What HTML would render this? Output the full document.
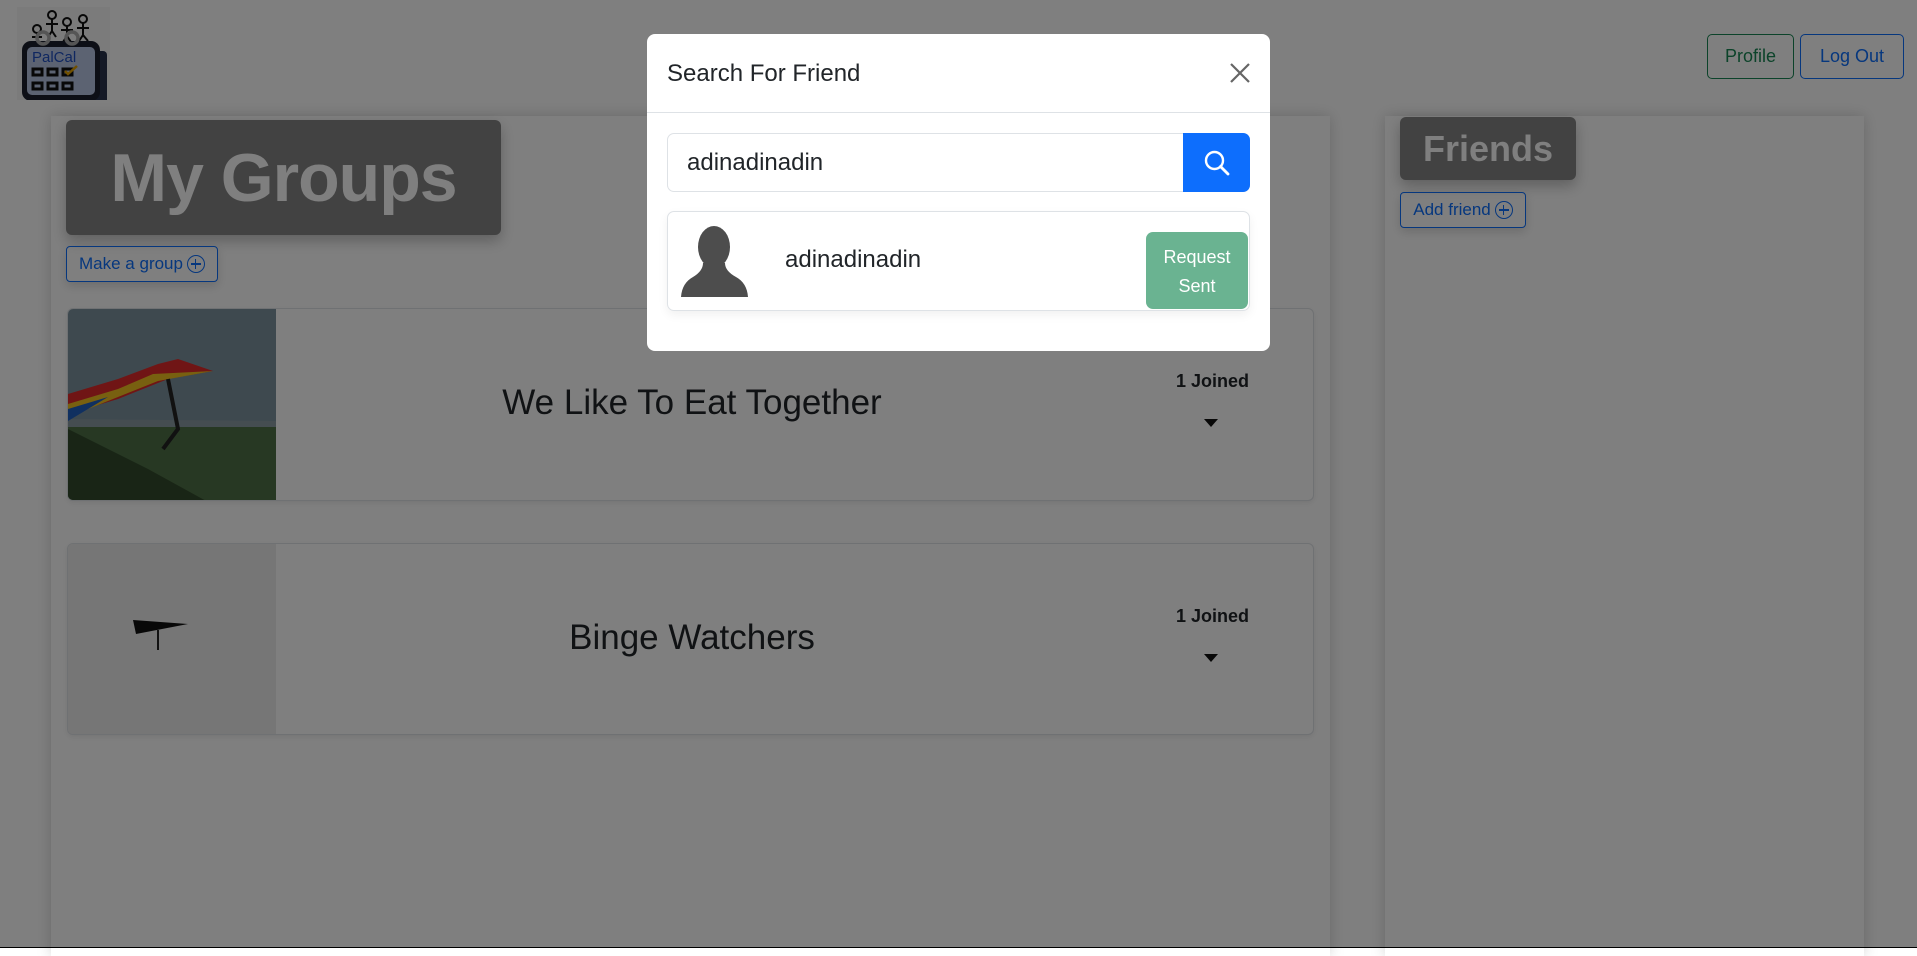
<!DOCTYPE html>
<html><head><meta charset="utf-8"><style>
*{box-sizing:border-box;margin:0;padding:0}
body{width:1917px;height:948px;overflow:hidden;position:relative;background:#fff;font-family:"Liberation Sans",sans-serif;color:#212529}
.abs{position:absolute}
.panel{background:#fff;box-shadow:0 0 14px rgba(0,0,0,.18)}
.btn-o{border:1px solid #0d6efd;color:#0d6efd;border-radius:4px;display:flex;align-items:center;justify-content:center;font-size:17px;box-shadow:0 4px 10px rgba(0,0,0,.15)}
.card{background:#fff;border:1px solid #dee2e6;border-radius:6px;overflow:hidden;box-shadow:0 2px 6px rgba(0,0,0,.08)}
.joined{position:absolute;font-size:18px;font-weight:bold;}
.caret{position:absolute;width:0;height:0;border-left:7px solid transparent;border-right:7px solid transparent;border-top:8px solid #111}
.plus{display:inline-block;width:18px;height:18px;border:1.5px solid #0d6efd;border-radius:50%;margin-left:4px;position:relative}
.plus:before{content:"";position:absolute;left:3px;right:3px;top:7px;height:1.5px;background:#0d6efd}
.plus:after{content:"";position:absolute;top:3px;bottom:3px;left:7px;width:1.5px;background:#0d6efd}
#ov{position:absolute;inset:0;background:rgba(0,0,0,.5)}
</style></head><body>

<!-- logo -->
<div class="abs" style="left:17px;top:7px;width:93px;height:93px;background:#f6f6f6"></div>
<svg class="abs" style="left:17px;top:7px" width="93" height="93" viewBox="0 0 93 93">
<g fill="none" stroke="#111" stroke-width="2">
<circle cx="20" cy="22" r="4"/><path d="M20 26v10M15 30h10M20 36l-5 6M20 36l4 6"/>
<circle cx="35" cy="8" r="4"/><path d="M35 12v12M29 17h12M35 24l-4 6M35 24l4 6"/>
<circle cx="50" cy="15" r="4"/><path d="M50 19v10M44 23h12M50 29l-4 6M50 29l4 6"/>
<circle cx="66" cy="12" r="4"/><path d="M66 16v12M60 21h12M66 28l-4 6M66 28l5 6"/>
</g>
<rect x="70" y="44" width="20" height="54" rx="4" fill="#27304a"/>
<rect x="5" y="34" width="78" height="60" rx="9" fill="#1a1f2c"/>
<rect x="10" y="40" width="68" height="48" rx="5" fill="#b9c6e4"/>
<text x="15" y="55" font-size="15" fill="#1e4fc0" font-family="Liberation Sans">PalCal</text>
<g fill="none" stroke="#111" stroke-width="3"><rect x="16" y="62" width="9" height="6"/><rect x="31" y="62" width="9" height="6"/><rect x="46" y="62" width="9" height="6"/><rect x="16" y="76" width="9" height="6"/><rect x="31" y="76" width="9" height="6"/><rect x="46" y="76" width="9" height="6"/></g>
<path d="M48 64l3 3 9-8" stroke="#e0a000" stroke-width="2.5" fill="none"/>
<circle cx="26" cy="31" r="6" fill="none" stroke="#aaa" stroke-width="3.5"/><circle cx="55" cy="31" r="6" fill="none" stroke="#aaa" stroke-width="3.5"/>
</svg>

<div class="abs" style="left:1707px;top:34px;width:87px;height:45px;border:1px solid #198754;color:#198754;border-radius:5px;font-size:18px;display:flex;align-items:center;justify-content:center">Profile</div>
<div class="abs" style="left:1800px;top:34px;width:104px;height:45px;border:1px solid #0d6efd;color:#0d6efd;border-radius:5px;font-size:18px;display:flex;align-items:center;justify-content:center">Log Out</div>

<!-- left panel -->
<div class="abs panel" style="left:51px;top:116px;width:1279px;height:840px"></div>
<div class="abs" style="left:66px;top:120px;width:435px;height:115px;background:#858585;border-radius:6px;box-shadow:0 6px 14px rgba(0,0,0,.25);color:#fff;font-weight:bold;font-size:68px;display:flex;align-items:center;justify-content:center;letter-spacing:-1px">My Groups</div>
<div class="abs btn-o" style="left:66px;top:246px;width:152px;height:36px">Make a group<span class="plus"></span></div>

<div class="abs card" style="left:67px;top:308px;width:1247px;height:193px">
 <svg class="abs" style="left:0;top:0" width="208" height="193" viewBox="0 0 208 193">
  <rect width="208" height="193" fill="#7d939e"/>
  <rect y="115" width="208" height="78" fill="#4f7046"/>
  <path d="M0 120 L80 160 L140 193 L0 193Z" fill="#324b2c"/>
  <path d="M0 110 L208 112 L208 118 L0 118Z" fill="#8a9aa3"/>
  <path d="M0 85 L50 70 L90 55 L110 50 L145 62 L100 70 L50 90 L0 105Z" fill="#e02a2a"/>
  <path d="M0 95 L50 80 L85 65 L145 62 L90 72 L50 88 L0 108Z" fill="#f0c020"/>
  <path d="M0 100 L40 88 L0 112Z" fill="#2060c0"/>
  <path d="M100 70 L110 120 L95 140" stroke="#222" stroke-width="4" fill="none"/>
 </svg>
 <div class="abs" style="left:414px;top:74px;width:420px;text-align:center;font-size:35px">We Like To Eat Together</div>
 <div class="joined" style="left:1108px;top:62px">1 Joined</div>
 <div class="caret" style="left:1136px;top:110px"></div>
</div>

<div class="abs card" style="left:67px;top:543px;width:1247px;height:192px">
 <div class="abs" style="left:0;top:0;width:208px;height:192px;background:#ececec"></div>
 <svg class="abs" style="left:60px;top:70px" width="70" height="45" viewBox="0 0 70 45"><path d="M5 6 L60 10 L8 20Z" fill="#111"/><path d="M30 16 L30 36" stroke="#222" stroke-width="2"/></svg>
 <div class="abs" style="left:414px;top:74px;width:420px;text-align:center;font-size:35px">Binge Watchers</div>
 <div class="joined" style="left:1108px;top:62px">1 Joined</div>
 <div class="caret" style="left:1136px;top:110px"></div>
</div>

<!-- right panel -->
<div class="abs panel" style="left:1385px;top:116px;width:479px;height:840px"></div>
<div class="abs" style="left:1400px;top:117px;width:176px;height:63px;background:#858585;border-radius:6px;box-shadow:0 6px 14px rgba(0,0,0,.25);color:#fff;font-weight:bold;font-size:36px;display:flex;align-items:center;justify-content:center">Friends</div>
<div class="abs btn-o" style="left:1400px;top:192px;width:126px;height:36px">Add friend<span class="plus"></span></div>

<div id="ov"></div>
<div class="abs" style="left:0;top:947px;width:1917px;height:1px;background:#000"></div>

<!-- modal -->
<div class="abs" style="left:647px;top:34px;width:623px;height:317px;background:#fff;border-radius:8px">
 <div class="abs" style="left:20px;top:26px;font-size:24px">Search For Friend</div>
 <svg class="abs" style="left:582px;top:28px" width="22" height="22" viewBox="0 0 22 22"><path d="M2 2L20 20M20 2L2 20" stroke="#666" stroke-width="2.2"/></svg>
 <div class="abs" style="left:0;top:78px;width:623px;height:1px;background:#dee2e6"></div>
 <div class="abs" style="left:20px;top:99px;width:583px;height:59px;border:1px solid #dee2e6;border-radius:7px"></div>
 <div class="abs" style="left:40px;top:115px;font-size:24px">adinadinadin</div>
 <div class="abs" style="left:536px;top:99px;width:67px;height:59px;background:#0d6efd;border-radius:0 7px 7px 0"></div>
 <svg class="abs" style="left:556px;top:115px" width="28" height="28" viewBox="0 0 28 28"><circle cx="11.5" cy="11.5" r="8.5" fill="none" stroke="#fff" stroke-width="2.4"/><path d="M17.5 17.5L25 25" stroke="#fff" stroke-width="2.8" stroke-linecap="round"/></svg>
 <div class="abs" style="left:20px;top:177px;width:583px;height:100px;border:1px solid #dee2e6;border-radius:7px;box-shadow:0 4px 10px rgba(0,0,0,.06)"></div>
 <svg class="abs" style="left:34px;top:191px" width="70" height="72" viewBox="0 0 70 72"><ellipse cx="33" cy="22" rx="16" ry="21" fill="#4d4d4d"/><path d="M22 38 Q22 46 12 52 Q1 58 0 72 L67 72 Q66 58 55 52 Q44 46 44 38Z" fill="#4d4d4d"/></svg>
 <div class="abs" style="left:138px;top:212px;font-size:24px">adinadinadin</div>
 <div class="abs" style="left:499px;top:198px;width:102px;height:77px;background:#6ab391;border-radius:7px;color:#fff;font-size:18px;line-height:29px;text-align:center;padding-top:11px">Request<br>Sent</div>
</div>
</body></html>
